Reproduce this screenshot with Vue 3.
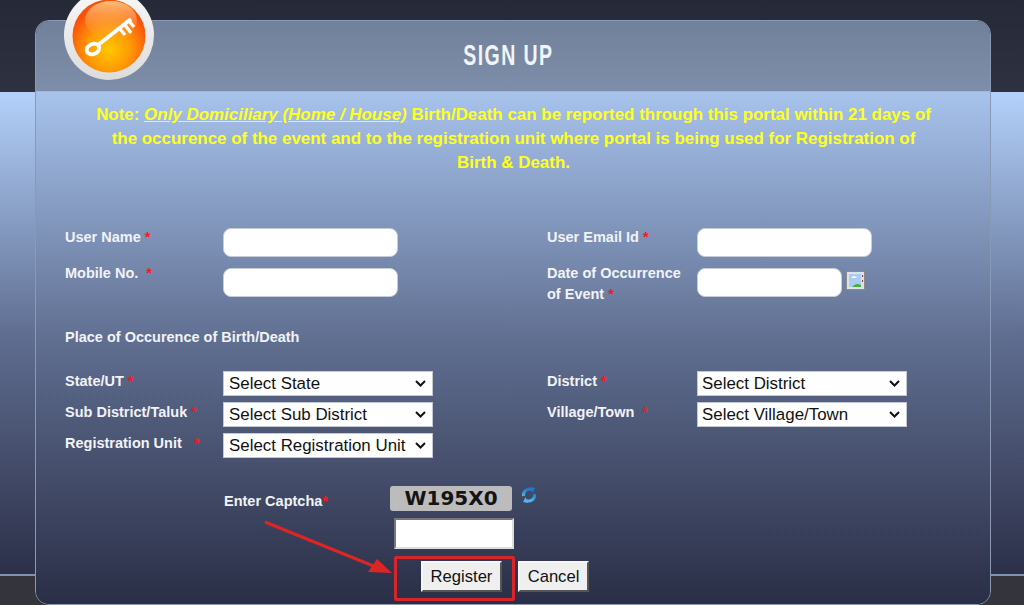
<script setup>
const leftSelects = [
  { label: 'State/UT', gap: ' ', value: 'Select State' },
  { label: 'Sub District/Taluk', gap: ' ', value: 'Select Sub District' },
  { label: 'Registration Unit', gap: '\u00a0\u00a0 ', value: 'Select Registration Unit' },
]
const rightSelects = [
  { label: 'District', gap: ' ', value: 'Select District' },
  { label: 'Village/Town', gap: '\u00a0 ', value: 'Select Village/Town' },
]
</script>

<template>
  <div class="page">
    <main class="card">
      <svg class="logo" viewBox="0 0 92 92" width="92" height="92" aria-hidden="true">
        <defs>
          <radialGradient id="orb" cx="50%" cy="68%" r="58%">
            <stop offset="0" stop-color="#ffc800" />
            <stop offset="0.5" stop-color="#ff9a06" />
            <stop offset="1" stop-color="#f8500c" />
          </radialGradient>
          <linearGradient id="gloss" x1="0" y1="0" x2="0" y2="1">
            <stop offset="0" stop-color="#ffdc90" stop-opacity="0.8" />
            <stop offset="1" stop-color="#ff9a50" stop-opacity="0.05" />
          </linearGradient>
          <linearGradient id="rim" x1="0" y1="0" x2="0" y2="1">
            <stop offset="0" stop-color="#f8f8f8" />
            <stop offset="1" stop-color="#dcdcdc" />
          </linearGradient>
          <linearGradient id="spin" x1="0" y1="0" x2="0" y2="1">
            <stop offset="0" stop-color="#2478bf" />
            <stop offset="1" stop-color="#4fb8f0" />
          </linearGradient>
        </defs>
        <circle cx="46" cy="35" r="45" fill="url(#rim)" />
        <circle cx="46" cy="36" r="36.5" fill="url(#orb)" />
        <ellipse cx="48" cy="20" rx="26" ry="19" fill="url(#gloss)" />
        <g fill="none" stroke="#fff" stroke-linecap="butt">
          <ellipse cx="30" cy="49" rx="6.5" ry="5" stroke-width="3.8" transform="rotate(-25 30 49)" />
          <path d="M35 45 L68 19" stroke-width="4" />
          <path d="M57 29 L62 35 M62 25 L68 33 M66 21 L71 27" stroke-width="3.4" />
        </g>
      </svg>

      <header class="card-head"><h1>SIGN UP</h1></header>

      <section class="card-body">
        <p class="note">
          Note: <a class="note-link">Only Domiciliary (Home / House)</a> Birth/Death can be reported through this portal within 21 days of<br />
          the occurence of the event and to the registration unit where portal is being used for Registration of<br />
          Birth &amp; Death.
        </p>

        <div class="grid text-rows">
          <label class="field-label up1">User Name <b>*</b></label>
          <input class="round" type="text" />
          <label class="field-label up1">User Email Id <b>*</b></label>
          <input class="round" type="text" />

          <label class="field-label up5">Mobile No. &nbsp;<b>*</b></label>
          <input class="round" type="text" />
          <label class="field-label stacked">Date of Occurrence of Event <b>*</b></label>
          <div class="date-cell">
            <input class="round short" type="text" />
            <svg class="broken" viewBox="0 0 19 19" width="19" height="19" aria-hidden="true">
              <rect x="0.5" y="0.5" width="18" height="18" fill="#dfe3e6" stroke="#8c8c8c" />
              <rect x="3" y="3" width="12" height="13" fill="#a9cdf0" />
              <path d="M5 7 Q8 3 11 7 Z" fill="#fff" />
              <path d="M6 16 Q10 11 15 14 V16 Z" fill="#4fae34" />
              <path d="M16.5 4 V6 M16.5 9 V11" stroke="#a33" stroke-width="1" />
            </svg>
          </div>
        </div>

        <p class="place">Place of Occurence of Birth/Death</p>

        <div class="selects">
          <div class="select-col">
            <div v-for="s in leftSelects" :key="s.label" class="select-row">
              <label class="field-label">{{ s.label }}{{ s.gap }}<b>*</b></label>
              <select><option>{{ s.value }}</option></select>
            </div>
          </div>
          <div class="select-col">
            <div v-for="s in rightSelects" :key="s.label" class="select-row right">
              <label class="field-label">{{ s.label }}{{ s.gap }}<b>*</b></label>
              <select><option>{{ s.value }}</option></select>
            </div>
          </div>
        </div>

        <div class="captcha">
          <label class="field-label captcha-label">Enter Captcha<b>*</b></label>
          <div class="captcha-main">
            <div class="captcha-top">
              <span class="code">W195X0</span>
              <svg class="refresh" viewBox="0 0 18 18" width="18" height="18" aria-hidden="true">
                <g fill="none" stroke="url(#spin)" stroke-width="3">
                  <path d="M3.5 10 A6 6 0 0 1 12 3.6" />
                  <path d="M14.5 8 A6 6 0 0 1 6 14.4" />
                </g>
                <path d="M10 1 L15 2 L12.5 7 Z" fill="#2478bf" />
                <path d="M8 17 L3 16 L5.5 11 Z" fill="#4fb8f0" />
              </svg>
            </div>
            <input class="captcha-input" type="text" />
            <div class="actions">
              <button type="button" class="reg">Register</button>
              <button type="button" class="cancel">Cancel</button>
            </div>
          </div>
        </div>
      </section>
    </main>

    <div class="red-box" aria-hidden="true"></div>
    <svg class="arrow" viewBox="0 0 140 60" width="140" height="60" aria-hidden="true">
      <path d="M3 2 L114 47" stroke="#dc2626" stroke-width="3.4" fill="none" />
      <path d="M130 53 L106 52 L115 39 Z" fill="#dc2626" />
    </svg>
  </div>
</template>

<style>
html, body { margin: 0; overflow: hidden; }
</style>

<style scoped>
.page {
  position: relative;
  width: 1024px;
  height: 605px;
  box-sizing: border-box;
  padding: 20px 33px 0 35px;
  overflow: hidden;
  font-family: "Liberation Sans", Arial, sans-serif;
  background:
    linear-gradient(#8191b0, #8191b0) 0 574px / 100% 2px no-repeat,
    linear-gradient(#262938, #2e3140) 0 0 / 100% 92px no-repeat,
    linear-gradient(#b3d1fb, #606e91 50%, #2c3049) 0 92px / 100% 482px no-repeat,
    #34343c;
}
.card {
  position: relative;
  height: 585px;
  box-sizing: border-box;
  border: 1.5px solid #8a9ab4;
  border-radius: 14px;
  display: flex;
  flex-direction: column;
  overflow: visible;
}
.logo { position: absolute; left: 27px; top: -21px; z-index: 2; }
.card-head {
  height: 70px;
  flex: none;
  border-radius: 13px 13px 0 0;
  background: linear-gradient(#71819b, #7e8eaa);
  display: flex;
  align-items: center;
  justify-content: center;
}
h1 {
  margin: 0 0 2px -9px;
  font-size: 30px;
  font-weight: 700;
  letter-spacing: 2.2px;
  color: #f1f4f7;
  transform: scaleX(0.65);
}
.card-body {
  flex: 1;
  border-radius: 0 0 13px 13px;
  border-top: 1px solid #a2b8da;
  background: linear-gradient(#a7c3ec, #5e6c8e 50%, #2a2e46);
  padding: 11px 28px 0 29px;
  min-height: 0;
}
.note {
  margin: 0;
  font-size: 16.95px;
  font-weight: 700;
  line-height: 24px;
  text-align: center;
  color: #ffff22;
  white-space: nowrap;
}
.note-link { font-style: italic; text-decoration: underline; }
.field-label {
  font-size: 14.5px;
  font-weight: 700;
  line-height: 20px;
  color: #f1f3f6;
}
.field-label b { color: #ee1c25; }
.up1 { margin-top: -1px; }
.up5 { margin-top: -5px; }
.grid {
  display: grid;
  grid-template-columns: 158px 324px 150px 1fr;
  grid-auto-rows: 29px;
  row-gap: 11px;
  margin-top: 53px;
}
.stacked { width: 140px; line-height: 20.5px; margin-top: -5px; }
.round {
  box-sizing: border-box;
  width: 175px;
  height: 29px;
  border: 1px solid #c8ccd4;
  border-radius: 8px;
  background: #fff;
  padding: 0;
}
.round.short { width: 145px; }
.date-cell { display: flex; align-items: flex-start; gap: 4px; }
.broken { margin-top: 3px; }
.place {
  margin: 30px 0 0;
  font-size: 14.5px;
  font-weight: 700;
  line-height: 20px;
  color: #f1f3f6;
}
.selects {
  display: grid;
  grid-template-columns: 482px 1fr;
  margin-top: 24px;
}
.select-col { display: flex; flex-direction: column; gap: 6px; }
.select-row {
  display: grid;
  grid-template-columns: 158px 210px;
  height: 25px;
}
.select-row.right { grid-template-columns: 150px 210px; }
select {
  appearance: none;
  box-sizing: border-box;
  width: 210px;
  height: 25px;
  border: 1px solid #c4c8d0;
  border-radius: 0;
  background: #fff url("data:image/svg+xml,%3Csvg xmlns='http://www.w3.org/2000/svg' width='11' height='7'%3E%3Cpath d='M1 1l4.5 4.5L10 1' fill='none' stroke='%23111' stroke-width='2'/%3E%3C/svg%3E") no-repeat right 6px center;
  color: #111;
  font: 16.9px "Liberation Sans", Arial, sans-serif;
  padding: 0 0 0 5px;
}
.right select { padding-left: 4px; }
.captcha {
  display: grid;
  grid-template-columns: 325px 1fr;
  margin-top: 28px;
}
.captcha-label { margin-left: 159px; padding-top: 5px; }
.captcha-main { display: flex; flex-direction: column; }
.captcha-top { display: flex; align-items: flex-start; gap: 8px; }
.code {
  box-sizing: border-box;
  width: 122px;
  height: 25px;
  background: #bcbcbc;
  border-radius: 3px;
  font: 700 20px/25px "DejaVu Sans", sans-serif;
  color: #141414;
  text-align: center;
}
.captcha-input {
  box-sizing: border-box;
  width: 120px;
  height: 31px;
  margin: 7px 0 0 4px;
  border: 2px solid;
  border-color: #777 #ddd #ddd #777;
  background: #fff;
  padding: 0;
}
.actions { display: flex; gap: 16px; margin: 12px 0 0 31px; }
button {
  box-sizing: border-box;
  height: 31px;
  padding: 0 7px;
  border: 2px solid;
  border-color: #f6f6f6 #555 #555 #f6f6f6;
  background: #efefef;
  color: #111;
  font: 16.6px "Liberation Sans", Arial, sans-serif;
}
button.reg { width: 81px; }
button.cancel { width: 71px; padding: 0; }
.red-box {
  position: absolute;
  left: 394px;
  top: 556px;
  width: 121px;
  height: 45px;
  box-sizing: border-box;
  border: 3px solid #d9242a;
  border-radius: 2px;
}
.arrow { position: absolute; left: 262px; top: 520px; }
</style>
